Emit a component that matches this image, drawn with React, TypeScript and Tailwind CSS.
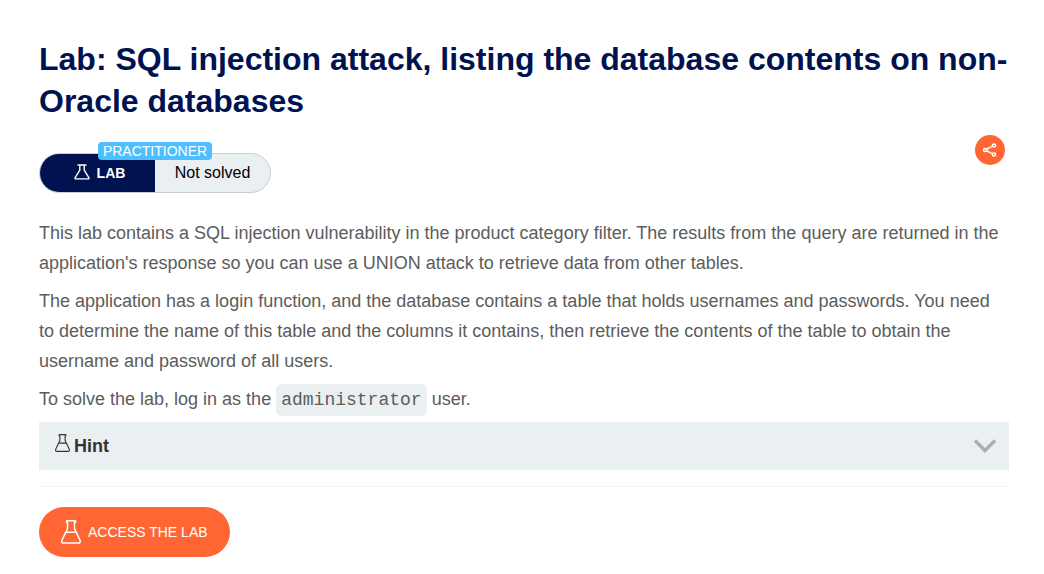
type IconProps = { className?: string };

function SmallFlask({ className }: IconProps) {
  return (
    <svg viewBox="0 0 16 16" className={className} fill="none" stroke="currentColor" strokeWidth="1.4" strokeLinejoin="round" aria-hidden="true">
      <path d="M3.5 1h9M5.8 1v5.2L1.2 13.6q-.6 1.3.7 1.3h12.2q1.3 0 .7-1.3L10.2 6.2V1" />
    </svg>
  );
}

function Flask({ className }: IconProps) {
  return (
    <svg viewBox="0 0 20 24" className={className} fill="none" stroke="currentColor" strokeWidth="1.5" strokeLinejoin="round" aria-hidden="true">
      <path d="M6.2.8h7.6q.9 0 .9.8 0 .9-1.2 1v6.1l5.4 11.2q1.2 3.2-1.6 3.2H2.7q-2.8 0-1.6-3.2L6.5 8.7V2.6q-1.2-.1-1.2-1 0-.8.9-.8ZM4.8 12.2h10.4" />
    </svg>
  );
}

export default function App() {
  return (
    <main className="bg-white px-[39px] pb-4 pr-[35px] pt-[38px] font-['Liberation_Sans',Arial,sans-serif] text-lg leading-[30px] text-[#5c5c5b]">
      <h1 className="text-[32px] font-bold leading-[42px] text-[#001350]">
        Lab: SQL injection attack, listing the database contents on non-Oracle databases
      </h1>

      <div className="flex items-start justify-between pr-1 pt-[13px]">
        <div className="relative mt-[18px] flex h-10 w-[232px] rounded-full border border-[#c9d0d0] bg-[#eaeff2] text-base">
          <div className="flex w-[115px] items-center justify-center gap-[7px] rounded-l-full bg-[#001350] pl-1 text-sm font-bold text-white">
            <SmallFlask className="mb-[2px] size-4" />
            <span>LAB</span>
          </div>
          <div className="flex flex-1 items-center justify-center text-black">Not solved</div>
          <span className="absolute -top-3 left-[58px] flex h-[18px] w-[114px] items-center justify-center rounded bg-[#4dbfff] text-sm text-white">
            PRACTITIONER
          </span>
        </div>
        <button type="button" aria-label="Share" className="flex size-[30px] items-center justify-center rounded-full bg-[#ff6633] text-white">
          <svg viewBox="0 0 14 14" className="size-[14px]" fill="none" stroke="currentColor" strokeWidth="1.5" aria-hidden="true">
            <circle cx="2.3" cy="7" r="1.6" />
            <circle cx="11" cy="2.5" r="1.6" />
            <circle cx="11" cy="11.5" r="1.6" />
            <path d="m3.8 6.2 5.8-3M3.8 7.8l5.8 3" />
          </svg>
        </button>
      </div>

      <div className="mt-[25px] flex flex-col gap-2">
        <p>
          This lab contains a SQL injection vulnerability in the product category filter. The results from the query are returned in the application's response so you can use a UNION attack to retrieve data from other tables.
        </p>
        <p>
          The application has a login function, and the database contains a table that holds usernames and passwords. You need to determine the name of this table and the columns it contains, then retrieve the contents of the table to obtain the username and password of all users.
        </p>
        <p>
          To solve the lab, log in as the{" "}
          <code className="rounded-md bg-[#eaeff2] px-[5px] py-[6px] font-['Courier','Liberation_Mono',monospace] text-lg">administrator</code>{" "}
          user.
        </p>
      </div>

      <details className="mt-2 bg-[#eaeff2]">
        <summary className="flex h-12 cursor-pointer list-none items-center justify-between pl-4 pr-3 font-bold text-[#333332]">
          <span className="flex items-center gap-1">
            <Flask className="mb-[6px] h-[18px] w-[15px]" />
            Hint
          </span>
          <svg viewBox="0 0 24 14" className="h-[14px] w-6" fill="none" stroke="#adadad" strokeWidth="3.5" aria-hidden="true">
            <path d="m2 1.5 10 10 10-10" />
          </svg>
        </summary>
        <p className="px-4 pb-4">You can find some useful payloads on our SQL injection cheat sheet.</p>
      </details>

      <hr className="mb-5 mt-4 border-[#f2f2f2]" />

      <a href="#lab" className="inline-flex h-[50px] items-center gap-[7px] rounded-full bg-[#ff6633] px-[22px] text-sm text-white">
        <Flask className="h-6 w-5" />
        ACCESS THE LAB
      </a>
    </main>
  );
}
